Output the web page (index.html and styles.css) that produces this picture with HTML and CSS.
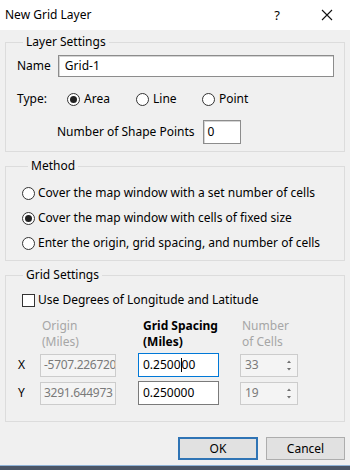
FILE: index.html
```html
<!DOCTYPE html>
<html lang="en">
<head>
    <meta charset="UTF-8">
    <title>New Grid Layer</title>
    <link rel="stylesheet" href="styles.css">
</head>
<body>
    <div class="dialog">
        <div class="titlebar">
            <span class="title">New Grid Layer</span>
            <span class="help">?</span>
            <svg class="close" width="12" height="12" viewBox="0 0 12 12"><path d="M1 1L11 11M11 1L1 11" stroke="#111" stroke-width="1.1" fill="none"/></svg>
        </div>
        <div class="content">
            <fieldset class="group layer">
                <legend>Layer Settings</legend>
                <div class="name-row">
                    <span>Name</span>
                    <div class="field name-field">Grid-1</div>
                </div>
                <div class="type-row">
                    <span class="type-lbl">Type:</span>
                    <span class="opt opt-area"><span class="radio on"></span>Area</span>
                    <span class="opt opt-line"><span class="radio"></span>Line</span>
                    <span class="opt"><span class="radio"></span>Point</span>
                </div>
                <div class="points-row">
                    <span>Number of Shape Points</span>
                    <div class="field points-field">0</div>
                </div>
            </fieldset>
            <fieldset class="group method">
                <legend>Method</legend>
                <div class="opt-row"><span class="radio"></span>Cover the map window with a set number of cells</div>
                <div class="opt-row"><span class="radio on"></span>Cover the map window with cells of fixed size</div>
                <div class="opt-row"><span class="radio"></span>Enter the origin, grid spacing, and number of cells</div>
            </fieldset>
            <fieldset class="group grid">
                <legend>Grid Settings</legend>
                <div class="check-row"><span class="checkbox"></span>Use Degrees of Longitude and Latitude</div>
                <div class="grid-table">
                    <span></span>
                    <span class="head dim">Origin<br>(Miles)</span>
                    <span class="head strong">Grid Spacing<br>(Miles)</span>
                    <span class="head dim">Number<br>of Cells</span>

                    <span class="axis">X</span>
                    <div class="field off origin">-5707.226720</div>
                    <div class="field focus spacing">0.2500<span class="caret"></span>00</div>
                    <div class="field off cells"><span>33</span>
                        <svg class="spin" width="16" height="21" viewBox="0 0 16 21"><path d="M6 8L8 5.5L10 8Z M6 13L8 15.5L10 13Z" fill="#707070"/></svg>
                    </div>

                    <span class="axis">Y</span>
                    <div class="field off origin">3291.644973</div>
                    <div class="field spacing">0.250000</div>
                    <div class="field off cells"><span>19</span>
                        <svg class="spin" width="16" height="21" viewBox="0 0 16 21"><path d="M6 8L8 5.5L10 8Z M6 13L8 15.5L10 13Z" fill="#707070"/></svg>
                    </div>
                </div>
            </fieldset>
            <div class="buttons">
                <button class="btn default">OK</button>
                <button class="btn">Cancel</button>
            </div>
        </div>
        <div class="taskbar"></div>
    </div>
</body>
</html>
```

FILE: styles.css
```css
body { margin: 0; background: #f0f0f0; color: #000; font-family: "Noto Sans", "Open Sans", sans-serif; font-size: 12px; line-height: 16px; }
.dialog { width: 350px; height: 470px; display: flex; flex-direction: column; }

.titlebar { height: 30px; background: #fff; display: flex; align-items: center; padding: 0 5px; }
.title { flex: 1; }
.help { margin-right: 41px; font-size: 13px; }
.close { margin-right: 12px; }

.content { flex: 1; padding: 0 5px 4px 5px; border-left: 1px solid #9cc0e4; margin-left: -1px; }

.group { margin: 0; padding: 0; border: 1px solid #dcdcdc; min-width: 0; }
.group legend { padding: 0 3px; margin-left: 6px; }
.layer { margin-top: 4px; padding: 5px 10px 7px 11px; }
.method { margin-top: 6px; padding: 9px 10px 7px 16px; }
.grid { margin-top: 6px; padding: 9px 10px 16px 11px; }

.field { box-sizing: border-box; height: 23px; border: 1px solid #7a7a7a; background: #fff; padding: 0 4px; display: flex; align-items: center; white-space: nowrap; overflow: hidden; }

.name-row { display: flex; align-items: center; gap: 7px; }
.name-field { flex: 1; height: 22px; border-color: #8c8c8c; box-shadow: inset 1px 1px 0 #d4d4d4; padding-left: 6px; }

.type-row { display: flex; align-items: center; height: 20px; margin-top: 12px; }
.type-lbl { width: 50px; }
.opt { display: flex; align-items: center; gap: 4px; }
.opt-area { width: 69px; }
.opt-line { width: 66px; }

.radio { box-sizing: border-box; width: 13px; height: 13px; border: 1px solid #333; border-radius: 50%; background: #fff; display: inline-flex; align-items: center; justify-content: center; }
.radio.on::after { content: ""; width: 7px; height: 7px; border-radius: 50%; background: #222; }

.points-row { display: flex; align-items: center; gap: 8px; margin-top: 11px; padding-left: 40px; }
.points-field { width: 38px; height: 24px; border-color: #8c8c8c; box-shadow: inset 1px 1px 0 #d4d4d4; }

.opt-row { display: flex; align-items: center; gap: 3px; height: 20px; margin-bottom: 5px; }
.opt-row:last-child { margin-bottom: 0; }

.check-row { display: flex; align-items: center; gap: 3px; padding-left: 5px; height: 16px; }
.checkbox { box-sizing: border-box; width: 13px; height: 13px; border: 1px solid #333; background: #fff; }

.grid-table { display: grid; grid-template-columns: 23px 98px 102px 58px; row-gap: 4px; margin-top: 10px; align-items: center; }
.head { padding-left: 2px; margin-bottom: -1px; }
.head.strong { font-weight: bold; padding-left: 5px; }
.dim { color: #a6a6a6; }
.axis { padding-left: 1px; }
.origin { width: 76px; padding-left: 3px; letter-spacing: -0.3px; }
.spacing { width: 81px; height: 24px; }
.focus { border-color: #0078d7; }
.caret { display: inline-block; width: 1px; height: 14px; background: #000; }
.cells { width: 58px; padding-right: 0; justify-content: space-between; }
.off { border-color: #cccccc; background: #f4f4f4; color: #7a7a7a; }

.buttons { display: flex; justify-content: flex-end; gap: 8px; margin-top: 15px; }
.btn { box-sizing: border-box; width: 80px; height: 23px; font: inherit; background: #e1e1e1; border: 1px solid #adadad; padding: 0; color: #000; }
.btn.default { border: 2px solid #2f74b5; }
.btn + .btn { width: 79px; }

.taskbar { height: 4px; background: #4a5566; border-top: 1px solid #8fb2d6; }
```
